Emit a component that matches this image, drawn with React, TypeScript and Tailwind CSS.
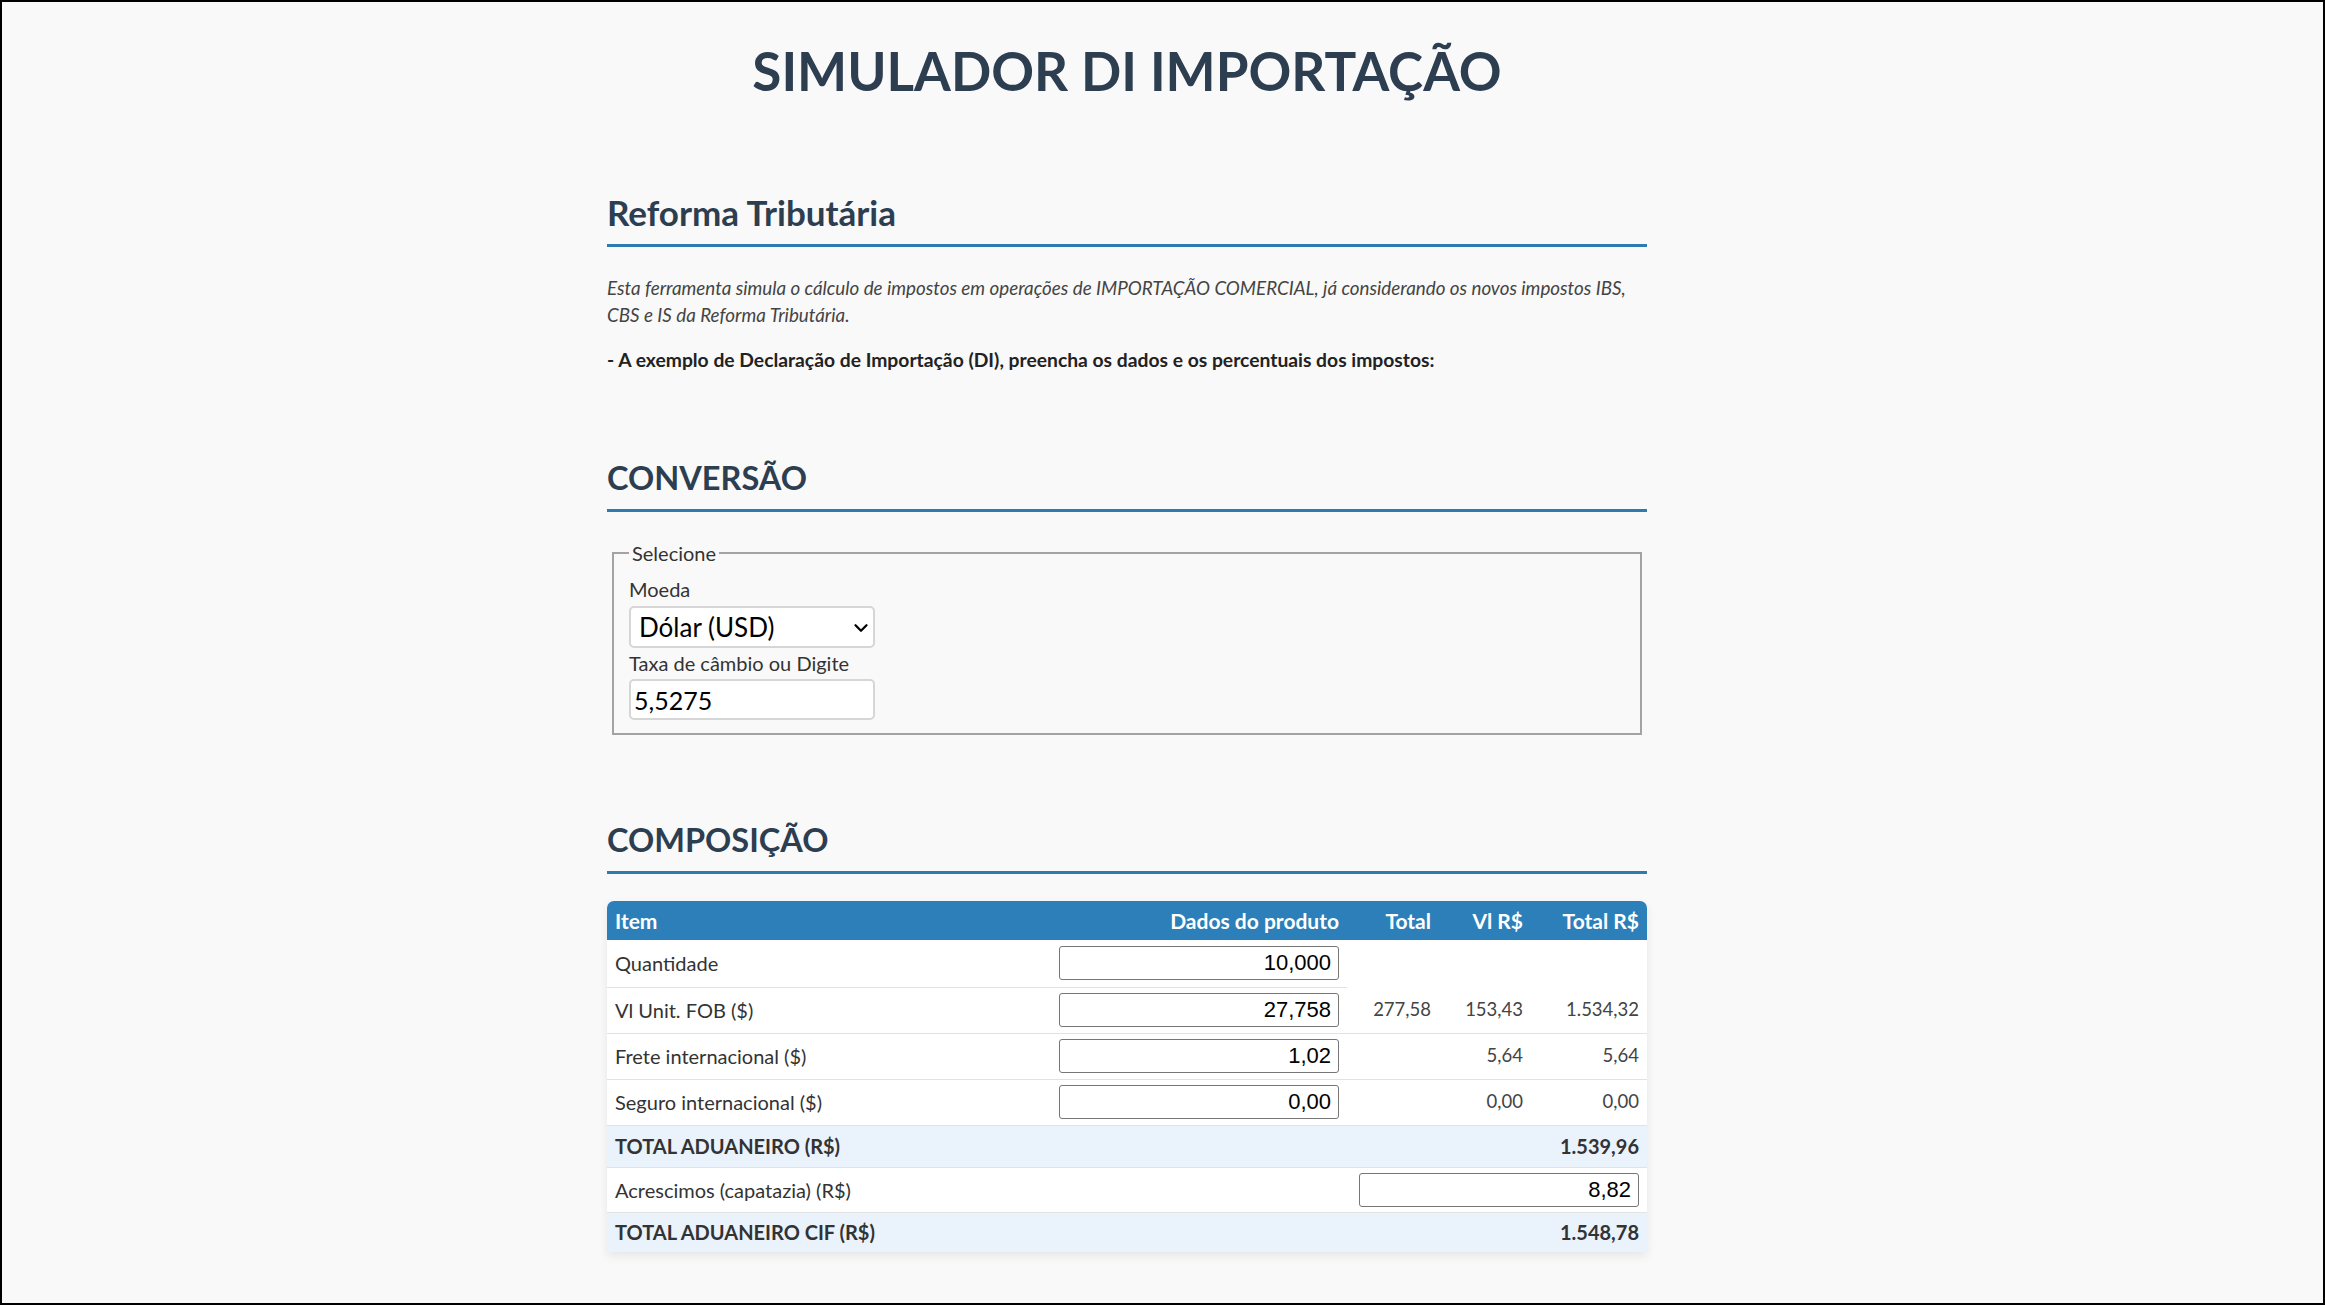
import { ChevronDown } from 'lucide-react'

const rows = [
  { label: 'Vl Unit. FOB ($)', input: '27,758', total: '277,58', vl: '153,43', totalRs: '1.534,32' },
  { label: 'Frete internacional ($)', input: '1,02', total: '', vl: '5,64', totalRs: '5,64' },
  { label: 'Seguro internacional ($)', input: '0,00', total: '', vl: '0,00', totalRs: '0,00' },
]

function SectionTitle({ children, big }: { children: React.ReactNode; big?: boolean }) {
  return (
    <h2
      className={
        big
          ? 'text-[35px] font-bold text-[#2c3e50] leading-[40px] pb-[12px] border-b-[3px] border-[#2e7bb0]'
          : 'text-[32.5px] font-bold text-[#2c3e50] leading-[40px] pb-[11px] border-b-[3px] border-[#2e7bb0]'
      }
    >
      {children}
    </h2>
  )
}

function NumInput({ value }: { value: string }) {
  return (
    <input
      readOnly
      value={value}
      className="w-[280px] h-[34px] bg-white border border-[#767676] rounded-[3px] px-[7px] text-right text-[22px] text-black font-['Liberation_Sans',Arial,sans-serif]"
    />
  )
}

export default function App() {
  return (
    <div className="w-[2325px] h-[1305px] border-2 border-black bg-[#f9f9f9] overflow-hidden font-['Lato',sans-serif] text-[#333]">
      <div className="ml-[605px] w-[1040px]">
        {/* Cabeçalho */}
        <h1 className="pt-[37px] text-center text-[53px] font-bold text-[#2c3e50] leading-[64px]">
          SIMULADOR DI IMPORTAÇÃO
        </h1>

        {/* Reforma */}
        <section className="mt-[89px]">
          <SectionTitle big>Reforma Tributária</SectionTitle>
          <p className="mt-[27px] text-[18.8px] italic leading-[27px] text-[#444]">
            Esta ferramenta simula o cálculo de impostos em operações de IMPORTAÇÃO COMERCIAL, já considerando os novos impostos IBS,
            <br />
            CBS e IS da Reforma Tributária.
          </p>
          <p className="mt-[18px] text-[19.3px] font-bold leading-[27px] text-[#222]">
            - A exemplo de Declaração de Importação (DI), preencha os dados e os percentuais dos impostos:
          </p>
        </section>

        {/* Conversão */}
        <section className="mt-[85px]">
          <SectionTitle>CONVERSÃO</SectionTitle>
          <fieldset className="mt-[29px] mx-[5px] border-2 border-[#a3a3a3] px-[15px] pt-0 pb-[13px]">
            <legend className="px-[3px] text-[20px] leading-[24px] text-[#333]">Selecione</legend>
            <label className="block mt-[11px] text-[20px] leading-[26px] text-[#333]">Moeda</label>
            <div className="relative mt-[4px] w-[246px]">
              <select className="block appearance-none w-[246px] h-[42px] bg-white border-2 border-[#d6d6d6] rounded-[5px] pl-[8px] text-[26px] text-black">
                <option>Dólar (USD)</option>
                <option>Euro (EUR)</option>
              </select>
              <ChevronDown className="pointer-events-none absolute left-[221px] top-[11px] w-[22px] h-[22px] text-black" strokeWidth={2.5} />
            </div>
            <label className="block mt-[2px] text-[20px] leading-[26px] text-[#333]">Taxa de câmbio ou Digite</label>
            <input
              readOnly
              value="5,5275"
              className="block mt-[3px] w-[246px] h-[41px] bg-white border-2 border-[#d6d6d6] rounded-[5px] px-[3px] text-[25px] text-black"
            />
          </fieldset>
        </section>

        {/* Composição */}
        <section className="mt-[85px]">
          <SectionTitle>COMPOSIÇÃO</SectionTitle>
          <div className="mt-[27px] rounded-t-[7px] overflow-hidden bg-white shadow-[0_4px_10px_rgba(0,0,0,0.08)]">
            <table className="w-full table-fixed border-collapse text-[20px]">
              <colgroup>
                <col className="w-[444px]" />
                <col className="w-[296px]" />
                <col className="w-[92px]" />
                <col className="w-[92px]" />
                <col className="w-[116px]" />
              </colgroup>
              <thead>
                <tr className="h-[39px] bg-[#2c7fb8] text-white font-bold text-[21px]">
                  <th className="px-[8px] text-left">Item</th>
                  <th className="px-[8px] text-right">Dados do produto</th>
                  <th className="px-[8px] text-right">Total</th>
                  <th className="px-[8px] text-right">Vl R$</th>
                  <th className="px-[8px] text-right">Total R$</th>
                </tr>
              </thead>
              <tbody>
                <tr className="h-[47px]">
                  <td className="px-[8px] border-b border-[#e2e2e2]">Quantidade</td>
                  <td className="px-[8px] text-right border-b border-[#e2e2e2]">
                    <NumInput value="10,000" />
                  </td>
                </tr>
                {rows.map((r) => (
                  <tr key={r.label} className="h-[46px] border-b border-[#e2e2e2]">
                    <td className="px-[8px]">{r.label}</td>
                    <td className="px-[8px] text-right">
                      <NumInput value={r.input} />
                    </td>
                    <td className="px-[8px] text-right text-[18.5px] text-[#444]">{r.total}</td>
                    <td className="px-[8px] text-right text-[18.5px] text-[#444]">{r.vl}</td>
                    <td className="px-[8px] text-right text-[18.5px] text-[#444]">{r.totalRs}</td>
                  </tr>
                ))}
                <tr className="h-[42px] bg-[#eaf2fb] border-b border-[#e2e2e2] font-bold">
                  <td className="px-[8px]">TOTAL ADUANEIRO (R$)</td>
                  <td colSpan={4} className="px-[8px] text-right">1.539,96</td>
                </tr>
                <tr className="h-[45px] border-b border-[#e2e2e2]">
                  <td colSpan={2} className="px-[8px]">Acrescimos (capatazia) (R$)</td>
                  <td colSpan={3} className="px-[8px] text-right">
                    <NumInput value="8,82" />
                  </td>
                </tr>
                <tr className="h-[40px] bg-[#eaf2fb] font-bold">
                  <td className="px-[8px]">TOTAL ADUANEIRO CIF (R$)</td>
                  <td colSpan={4} className="px-[8px] text-right">1.548,78</td>
                </tr>
              </tbody>
            </table>
          </div>
        </section>
      </div>
    </div>
  )
}
